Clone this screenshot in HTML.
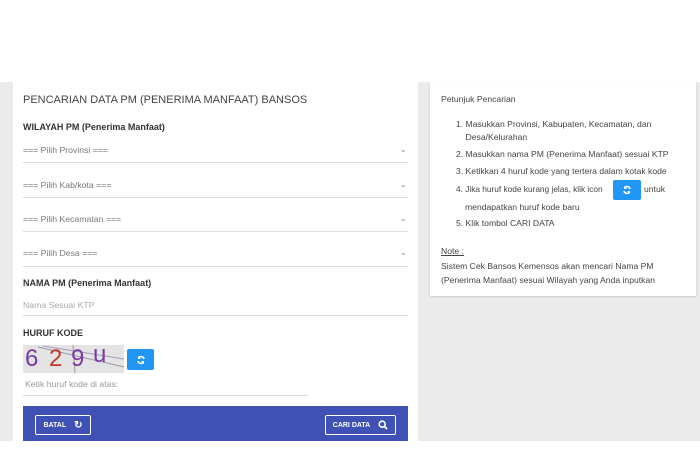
<!DOCTYPE html>
<html><head><meta charset="utf-8"><style>
*{margin:0;padding:0;box-sizing:border-box}
body{width:700px;height:465px;background:#fff;font-family:"Liberation Sans",sans-serif;position:relative;overflow:hidden}
.gray{position:absolute;left:0;top:82px;width:700px;height:359px;background:#ebebeb}
.card{position:absolute;background:#fff}
.t{position:absolute;white-space:nowrap}
.sel{position:absolute;left:23px;width:385px;height:1px;background:#ddd}
.st{position:absolute;left:23px;font-size:8.7px;color:#777}
.ch{position:absolute;left:400px;font-size:8px;color:#888}
.lbl{position:absolute;left:23px;font-size:9px;font-weight:bold;color:#333}
.btn{position:absolute;border:1.5px solid #fff;border-radius:2px;color:#fff;font-size:7px;font-weight:bold;display:flex;align-items:center;justify-content:center;gap:8px}
.rb{background:#2196f3;border-radius:2px;position:absolute;display:flex;align-items:center;justify-content:center}
.r{position:absolute;left:441px;font-size:8.6px;color:#444;white-space:nowrap}
</style></head><body>
<div class="gray"></div>
<div class="card" style="left:13px;top:82px;width:405px;height:359px"></div>
<div class="card" style="left:430px;top:82px;width:266px;height:214px;box-shadow:0 1px 2px rgba(0,0,0,.15)"></div>

<div class="t" style="left:23px;top:94px;font-size:11px;color:#444">PENCARIAN DATA PM (PENERIMA MANFAAT) BANSOS</div>
<div class="lbl" style="top:122px">WILAYAH PM (Penerima Manfaat)</div>
<div class="st" style="top:145px">=== Pilih Provinsi ===</div><div class="ch" style="top:145px">⌄</div><div class="sel" style="top:162px"></div>
<div class="st" style="top:180px">=== Pilih Kab/kota ===</div><div class="ch" style="top:180px">⌄</div><div class="sel" style="top:197px"></div>
<div class="st" style="top:214px">=== Pilih Kecamatan ===</div><div class="ch" style="top:214px">⌄</div><div class="sel" style="top:231px"></div>
<div class="st" style="top:248px">=== Pilih Desa ===</div><div class="ch" style="top:248px">⌄</div><div class="sel" style="top:266px"></div>
<div class="lbl" style="top:278px">NAMA PM (Penerima Manfaat)</div>
<div class="st" style="top:300px;color:#aaa">Nama Sesuai KTP</div><div class="sel" style="top:315px"></div>
<div class="lbl" style="top:328px">HURUF KODE</div>
<div style="position:absolute;left:23px;top:345px;width:101px;height:28px;background:#e4e4e4;overflow:hidden">
<svg width="101" height="28" style="position:absolute;left:0;top:0"><line x1="15" y1="2" x2="101" y2="22" stroke="#99a" stroke-width="1"/><line x1="20" y1="1" x2="101" y2="14" stroke="#a9b" stroke-width="1"/><line x1="50" y1="0" x2="52" y2="28" stroke="#a99" stroke-width="1"/></svg>
<span class="t" style="left:2px;top:0;font-size:24px;color:#7a3aa5">6</span>
<span class="t" style="left:26px;top:0;font-size:24px;color:#c0392b">2</span>
<span class="t" style="left:48px;top:0;font-size:24px;color:#7a3aa5">9</span>
<span class="t" style="left:70px;top:-4px;font-size:24px;color:#7a3aa5">u</span>
</div>
<div class="rb" style="left:127px;top:349px;width:27px;height:21px"><svg width="10" height="10" viewBox="0 0 10 10"><path d="M8 4A3 3 0 0 0 2.5 3M2 6A3 3 0 0 0 7.5 7" stroke="#fff" stroke-width="1.6" fill="none"/><path d="M2 1v3h3z M8 9V6H5z" fill="#fff"/></svg></div>
<div class="st" style="left:25px;top:379px;color:#999">Ketik huruf kode di atas:</div>
<div class="sel" style="top:395px;width:285px"></div>
<div style="position:absolute;left:23px;top:406px;width:385px;height:35px;background:#3f51b5"></div>
<div class="btn" style="left:35px;top:415px;width:56px;height:20px">BATAL <span style="font-size:10px">↻</span></div>
<div class="btn" style="left:325px;top:415px;width:71px;height:20px">CARI DATA <svg width="10" height="10" viewBox="0 0 10 10"><circle cx="4.2" cy="4.2" r="3" stroke="#fff" stroke-width="1.6" fill="none"/><path d="M6.5 6.5L9 9" stroke="#fff" stroke-width="1.8"/></svg></div>

<div class="r" style="top:94px">Petunjuk Pencarian</div>
<div class="r" style="left:456px;top:118px;line-height:13px">1. Masukkan Provinsi, Kabupaten, Kecamatan, dan<br>&nbsp;&nbsp;&nbsp;&nbsp;Desa/Kelurahan</div>
<div class="r" style="left:456px;top:149px">2. Masukkan nama PM (Penerima Manfaat) sesuai KTP</div>
<div class="r" style="left:456px;top:166px">3. Ketikkan 4 huruf kode yang tertera dalam kotak kode</div>
<div class="r" style="left:456px;top:184px;font-size:8.3px">4. Jika huruf kode kurang jelas, klik icon</div>
<div class="rb" style="left:613px;top:180px;width:28px;height:20px"><svg width="10" height="10" viewBox="0 0 10 10"><path d="M8 4A3 3 0 0 0 2.5 3M2 6A3 3 0 0 0 7.5 7" stroke="#fff" stroke-width="1.6" fill="none"/><path d="M2 1v3h3z M8 9V6H5z" fill="#fff"/></svg></div>
<div class="r" style="left:644px;top:184px">untuk</div>
<div class="r" style="left:465px;top:202px">mendapatkan huruf kode baru</div>
<div class="r" style="left:456px;top:218px">5. Klik tombol CARI DATA</div>
<div class="r" style="top:246px;text-decoration:underline">Note :</div>
<div class="r" style="top:259px;line-height:14px">Sistem Cek Bansos Kemensos akan mencari Nama PM<br>(Penerima Manfaat) sesuai Wilayah yang Anda inputkan</div>
</body></html>
